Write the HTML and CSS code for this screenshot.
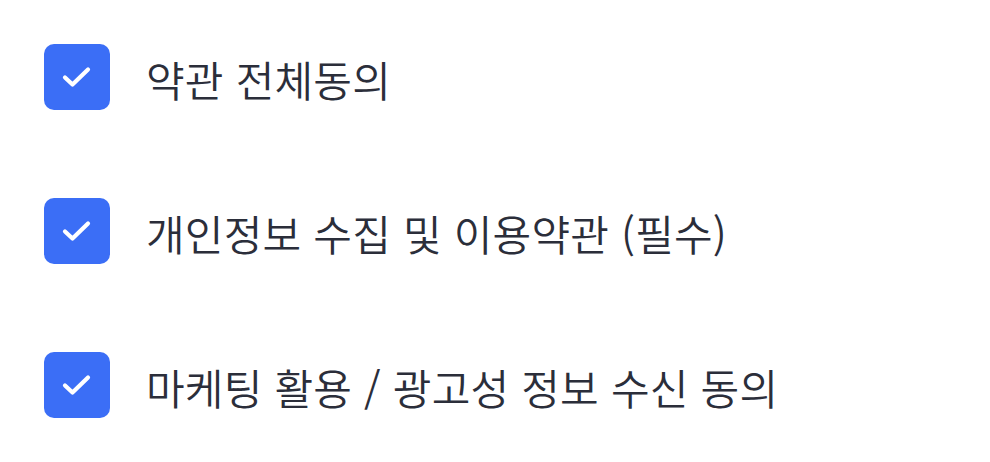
FILE: index.html
```html
<!DOCTYPE html>
<html lang="ko">
<head>
<meta charset="utf-8">
<link rel="stylesheet" href="styles.css">
</head>
<body>
<ul class="terms">
  <li class="term">
    <span class="box"><svg viewBox="0 0 66 66" width="66" height="66"><path d="M21 33.5 L28.5 40.5 L44 25.5" fill="none" stroke="#fff" stroke-width="4.2" stroke-linecap="round" stroke-linejoin="round"/></svg></span>
    <span class="label">약관 전체동의</span>
  </li>
  <li class="term">
    <span class="box"><svg viewBox="0 0 66 66" width="66" height="66"><path d="M21 33.5 L28.5 40.5 L44 25.5" fill="none" stroke="#fff" stroke-width="4.2" stroke-linecap="round" stroke-linejoin="round"/></svg></span>
    <span class="label">개인정보 수집 및 이용약관 (필수)</span>
  </li>
  <li class="term">
    <span class="box"><svg viewBox="0 0 66 66" width="66" height="66"><path d="M21 33.5 L28.5 40.5 L44 25.5" fill="none" stroke="#fff" stroke-width="4.2" stroke-linecap="round" stroke-linejoin="round"/></svg></span>
    <span class="label">마케팅 활용 / 광고성 정보 수신 동의</span>
  </li>
</ul>
</body>
</html>
```
FILE: styles.css
```css
html, body {
  margin: 0;
  padding: 0;
  background: #ffffff;
}
body {
  font-family: "Noto Sans CJK KR", "Noto Sans", sans-serif;
  color: #2b2e3a;
}
.terms {
  list-style: none;
  margin: 0;
  padding: 44px 0 0 44px;
  display: flex;
  flex-direction: column;
  gap: 88px;
}
.term {
  display: flex;
  align-items: center;
  height: 66px;
  gap: 36px;
}
.box {
  width: 66px;
  height: 66px;
  border-radius: 10px;
  background: #3b6ef6;
  display: flex;
  flex-shrink: 0;
}
.label {
  font-size: 42px;
  font-weight: 350;
  line-height: 1;
  letter-spacing: 0.2px;
  padding-top: 3px;
}
```
